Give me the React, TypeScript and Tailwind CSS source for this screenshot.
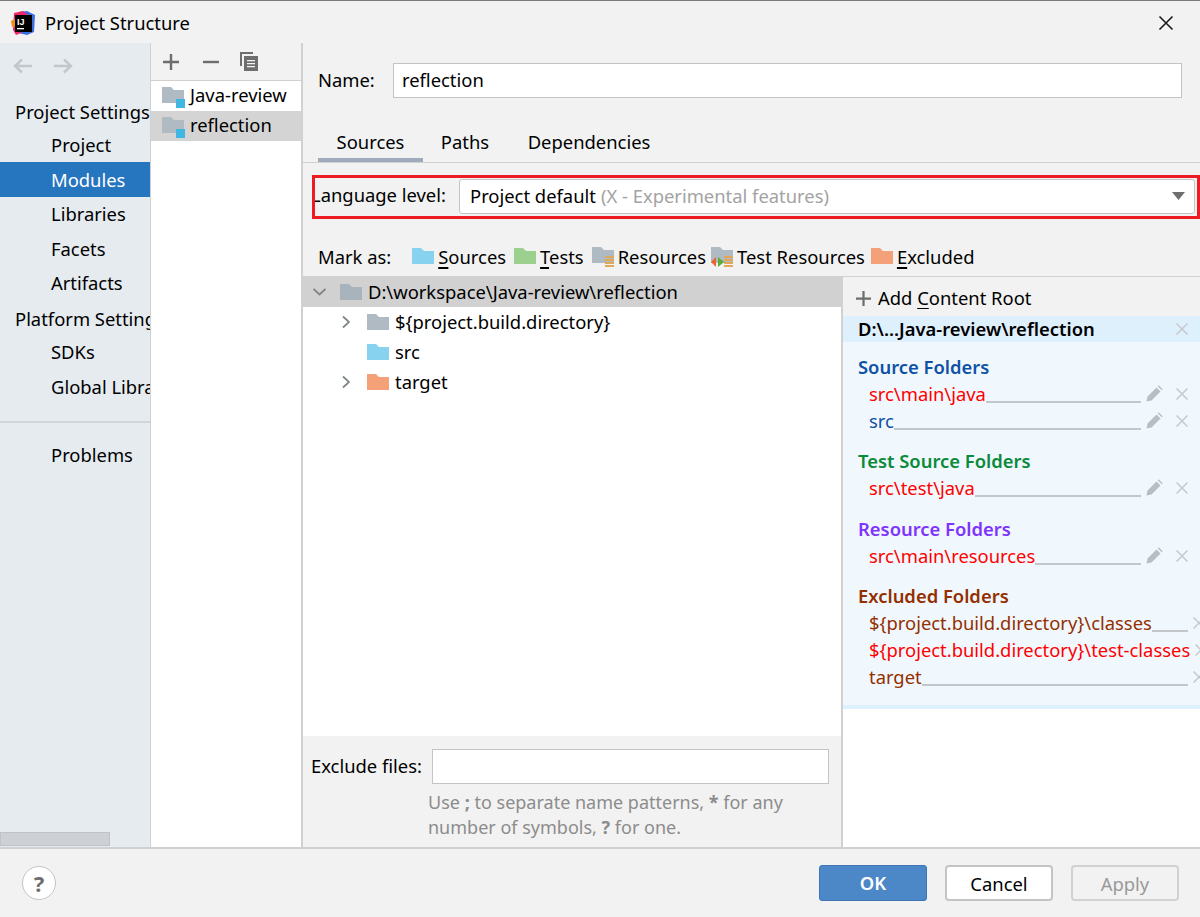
import { ReactNode } from 'react'

const FONT = 'font-["Noto_Sans",sans-serif]'

const Folder = ({ color, className = '' }: { color: string; className?: string }) => (
  <svg width="22" height="16" viewBox="0 0 22 16" className={`shrink-0 ${className}`}>
    <path d="M0 0h9l3 3h10v13H0z" fill={color} />
  </svg>
)

const Stack = ({ className = '' }: { className?: string }) => (
  <svg width="9" height="11" viewBox="0 0 9 11" className={className}>
    <path d="M0 0h9v2H0zM0 3h9v2H0zM0 6h9v2H0zM0 9h9v2H0z" fill="#e0a95a" />
  </svg>
)

const ModuleIcon = () => (
  <span className="relative mr-[4px] h-[24px] w-[24px] shrink-0">
    <Folder color="#afbac3" className="absolute top-[3px] left-0" />
    <span className="absolute bottom-0 left-[14px] h-[9px] w-[9px] bg-[#40b6e0]" />
  </span>
)

const Close = ({ color = '#c5c9cc' }: { color?: string }) => (
  <svg width="12" height="12" viewBox="0 0 12 12" className="shrink-0">
    <path d="M0.500 0.500l11 11M11.500 0.500l-11 11" stroke={color} strokeWidth="1.500" fill="none" />
  </svg>
)

const Pencil = () => (
  <svg width="17" height="17" viewBox="0 0 17 17" className="shrink-0">
    <path d="M0.500 16.500l1-5 9-9 4 4-9 9zM11.700 1.300l1-1 4 4-1 1z" fill="#b9bec3" />
  </svg>
)

const Chevron = ({ down }: { down?: boolean }) => (
  <svg width="13" height="14" viewBox="0 0 13 14" className="shrink-0">
    <path d={down ? 'M0.500 4l6 5.500L12.500 4' : 'M3 1.500L9 7l-6 5.500'} stroke="#7f8487" strokeWidth="1.700" fill="none" />
  </svg>
)

const Plus = ({ size = 16 }: { size?: number }) => (
  <svg width={size} height={size} viewBox="0 0 16 16" className="shrink-0">
    <path d="M6.800 0h2.400v6.800H16v2.400H9.200V16H6.800V9.200H0V6.800h6.800z" fill="#6e6e6e" />
  </svg>
)

const NavItem = ({ label, active }: { label: string; active?: boolean }) => (
  <div className={`flex h-[34.400px] items-center pl-[51px] whitespace-nowrap ${active ? 'bg-[#2675bf] text-white' : ''}`}>
    {label}
  </div>
)

const MarkItem = ({ icon, className = '', children }: { icon: ReactNode; className?: string; children: ReactNode }) => (
  <div className={`flex items-center gap-[4px] whitespace-nowrap ${className}`}>
    {icon}
    <span>{children}</span>
  </div>
)

const Mnemonic = ({ children }: { children: ReactNode }) => (
  <span className="underline decoration-2 underline-offset-[3px]">{children}</span>
)

const FolderRow = ({
  label,
  color,
  edit = true,
  fill = true
}: {
  label: string
  color: string
  edit?: boolean
  fill?: boolean
}) => (
  <div className="flex h-[27px] items-center pl-[26px]">
    <span className={`whitespace-nowrap ${color}`}>{label}</span>
    {fill ? <span className="mt-[17px] h-[2px] min-w-0 flex-1 bg-[#c4c7ca]" /> : <span className="min-w-0 flex-1" />}
    {edit ? (
      <span className="ml-[4px] flex w-[55px] shrink-0 items-center pl-[1px]">
        <Pencil />
        <span className="ml-[13px]">
          <Close />
        </span>
      </span>
    ) : (
      <span className="ml-[5px] w-[7px] shrink-0 overflow-hidden">
        <Close />
      </span>
    )}
  </div>
)

const SectionTitle = ({ label, color }: { label: string; color: string }) => (
  <div className={`flex h-[27px] items-center pl-[15px] font-semibold ${color}`}>{label}</div>
)

export default function App() {
  return (
    <div className={`flex h-[917px] w-[1200px] flex-col overflow-hidden bg-[#f2f2f2] text-[18.400px] text-black ${FONT}`}>
      <div className="flex h-[43px] shrink-0 items-center border-t border-[#7a7a7a] pt-[1px] pr-[26px] pl-[11px]">
        <svg width="24" height="24" viewBox="0 0 24 24" className="shrink-0">
          <path d="M8 1l8-1 8 4-1 17-7 3-9-2z" fill="#3d6ee0" />
          <path d="M3 2l9-2 4 3-6 19-5 2-3-5z" fill="#f0276d" />
          <path d="M0 10l4-2 1 8-4 0z" fill="#f58a1f" />
          <rect x="4" y="4" width="17" height="17" fill="#000" />
          <text x="6" y="13.500" fontSize="9" fontWeight="700" fill="#fff" fontFamily="Liberation Sans, sans-serif">IJ</text>
          <path d="M6 17h7v1.300H6z" fill="#fff" />
        </svg>
        <span className="ml-[10px]">Project Structure</span>
        <svg width="16" height="16" viewBox="0 0 16 16" className="ml-auto shrink-0">
          <path d="M1.500 1.500l13 13M14.500 1.500l-13 13" stroke="#1a1a1a" strokeWidth="1.600" fill="none" />
        </svg>
      </div>

      <div className="flex min-h-0 flex-1">
        <aside className="flex w-[151px] shrink-0 flex-col overflow-hidden border-r border-[#d1d1d1] bg-[#e6ebf0]">
          <div className="flex h-[43px] shrink-0 items-center gap-[20px] pt-[2px] pl-[13px]">
            <svg width="20" height="16" viewBox="0 0 20 16">
              <path d="M19 8H2M9 1.500L2 8l7 6.500" stroke="#c4c7ca" strokeWidth="2.400" fill="none" />
            </svg>
            <svg width="20" height="16" viewBox="0 0 20 16">
              <path d="M1 8h17M11 1.500L18 8l-7 6.500" stroke="#c4c7ca" strokeWidth="2.400" fill="none" />
            </svg>
          </div>
          <div className="mt-[9px]">
            <div className="flex h-[33px] items-center pl-[15px] whitespace-nowrap">Project Settings</div>
            <NavItem label="Project" />
            <NavItem label="Modules" active />
            <NavItem label="Libraries" />
            <NavItem label="Facets" />
            <NavItem label="Artifacts" />
            <div className="flex h-[35px] items-center pt-[2px] pl-[15px] whitespace-nowrap">Platform Settings</div>
            <NavItem label="SDKs" />
            <NavItem label="Global Libraries" />
          </div>
          <div className="mt-[17px] h-[2px] bg-[#d0d5da]" />
          <div className="mt-[15px]">
            <NavItem label="Problems" />
          </div>
          <div className="mt-auto mb-[1px] h-[14px] w-[110px] border border-[#bfc3c8] bg-[#cdd1d6]" />
        </aside>

        <div className="flex w-[152px] shrink-0 flex-col border-r-2 border-[#d1d1d1] bg-white">
          <div className="flex h-[38px] shrink-0 items-center border-b border-[#d1d1d1] bg-[#f2f2f2] pl-[12px]">
            <Plus />
            <svg width="16" height="16" viewBox="0 0 16 16" className="ml-[24px] shrink-0">
              <path d="M0 6.800h16v2.400H0z" fill="#6e6e6e" />
            </svg>
            <svg width="18" height="19" viewBox="0 0 18 19" className="ml-[21px] shrink-0">
              <path d="M0 0h13v2H2v12H0z" fill="#6e6e6e" />
              <path d="M4 4h14v15H4z" fill="#6e6e6e" />
              <path d="M7 8h8v1.300H7zM7 11h8v1.300H7zM7 14h8v1.300H7z" fill="#f2f2f2" />
            </svg>
          </div>
          <div className="flex h-[30px] items-center pl-[11px]">
            <ModuleIcon />
            <span className="pb-[2px]">Java-review</span>
          </div>
          <div className="flex h-[30px] items-center bg-[#d4d4d4] pl-[11px]">
            <ModuleIcon />
            <span className="pb-[2px]">reflection</span>
          </div>
        </div>

        <main className="flex min-w-0 flex-1 flex-col">
          <div className="flex h-[75px] shrink-0 items-start pt-[20px] pr-[18px] pl-[15px]">
            <span className="flex h-[35px] w-[75px] items-center pb-[2px]">Name:</span>
            <div className="flex h-[35px] flex-1 items-center border border-[#c4c4c4] bg-white pb-[2px] pl-[8px]">reflection</div>
          </div>

          <div className="flex h-[45px] shrink-0 border-b border-[#d1d1d1] pl-[15px]">
            <div className="flex w-[105px] items-center justify-center border-b-4 border-[#a0aabb] pt-[7px]">Sources</div>
            <div className="flex w-[84px] items-center justify-center border-b-4 border-transparent pt-[7px]">Paths</div>
            <div className="ml-[2px] flex w-[160px] items-center justify-center border-b-4 border-transparent pt-[7px]">Dependencies</div>
          </div>

          <div className="relative flex h-[56px] shrink-0 items-center pt-[10px] pr-[5px] pl-[8px]">
            <span className="w-[148px] pb-[3px] whitespace-nowrap">Language level:</span>
            <div className="flex h-[35px] flex-1 items-center rounded-[3px] border border-[#c4c4c4] bg-white pr-[9px] pl-[10px]">
              <span className="whitespace-nowrap">Project default</span>
              <span className="ml-[5px] whitespace-nowrap text-[#a3a3a3]">(X - Experimental features)</span>
              <svg width="13" height="8" viewBox="0 0 13 8" className="ml-auto">
                <path d="M0 0h13L6.500 8z" fill="#6e6e6e" />
              </svg>
            </div>
            <div className="pointer-events-none absolute top-[12px] right-0 bottom-0 left-[9px] border-[3px] border-[#ed1c24]" />
          </div>

          <div className="flex h-[57px] shrink-0 items-center pt-[18px] pl-[15px]">
            <span className="mr-[21px]">Mark as:</span>
            <MarkItem icon={<Folder color="#87d2ee" />}>
              <Mnemonic>S</Mnemonic>ources
            </MarkItem>
            <MarkItem className="ml-[8px]" icon={<Folder color="#9cd08e" />}>
              <Mnemonic>T</Mnemonic>ests
            </MarkItem>
            <MarkItem
              className="ml-[8px]"
              icon={
                <span className="relative h-[22px] w-[22px]">
                  <Folder color="#afbac3" className="absolute top-[2px] left-0" />
                  <Stack className="absolute right-0 bottom-0" />
                </span>
              }>
              Resources
            </MarkItem>
            <MarkItem
              className="ml-[5px]"
              icon={
                <span className="relative h-[22px] w-[22px]">
                  <Folder color="#afbac3" className="absolute top-[2px] left-0" />
                  <Stack className="absolute right-0 bottom-0" />
                  <svg width="14" height="10" viewBox="0 0 14 10" className="absolute bottom-0 left-0">
                    <path d="M5 0v10L0 5z" fill="#e8662e" />
                    <path d="M7 0v10l6-5z" fill="#5cad37" />
                  </svg>
                </span>
              }>
              Test Resources
            </MarkItem>
            <MarkItem className="ml-[6px]" icon={<Folder color="#f4a17a" />}>
              <Mnemonic>E</Mnemonic>xcluded
            </MarkItem>
          </div>

          <div className="flex min-h-0 flex-1 border-t border-[#d1d1d1]">
            <div className="flex w-[540px] shrink-0 flex-col border-r-2 border-[#d1d1d1]">
              <div className="min-h-0 flex-1 bg-white">
                <div className="flex h-[30px] items-center bg-[#d1d1d1] pl-[10px]">
                  <Chevron down />
                  <Folder color="#a8b3bc" className="ml-[14px]" />
                  <span className="ml-[6px]">D:\workspace\Java-review\reflection</span>
                </div>
                <div className="flex h-[30px] items-center pl-[37px]">
                  <Chevron />
                  <Folder color="#afbac3" className="ml-[14px]" />
                  <span className="ml-[6px]">{'${project.build.directory}'}</span>
                </div>
                <div className="flex h-[30px] items-center pl-[64px]">
                  <Folder color="#87d2ee" />
                  <span className="ml-[6px]">src</span>
                </div>
                <div className="flex h-[30px] items-center pl-[37px]">
                  <Chevron />
                  <Folder color="#f4a17a" className="ml-[14px]" />
                  <span className="ml-[6px]">target</span>
                </div>
              </div>
              <div className="h-[111px] shrink-0 pt-[13px] pl-[8px]">
                <div className="flex items-center">
                  <span className="w-[121px] pb-[2px]">Exclude files:</span>
                  <div className="h-[35px] w-[397px] border border-[#c4c4c4] bg-white" />
                </div>
                <p className="mt-[6px] ml-[117px] text-[18px] leading-[25px] text-[#8c8c8c]">
                  Use <b>;</b> to separate name patterns, <b>*</b> for any
                  <br />
                  number of symbols, <b>?</b> for one.
                </p>
              </div>
            </div>

            <div className="flex min-w-0 flex-1 flex-col bg-white">
              <div className="flex h-[39px] shrink-0 items-center gap-[7px] bg-[#f2f2f2] pt-[3px] pl-[13px]">
                <Plus size={15} />
                <span>
                  Add <span className="underline underline-offset-[3px]">C</span>ontent Root
                </span>
              </div>
              <div className="flex h-[26px] shrink-0 items-center justify-between bg-[#dff0fd] pr-[12px] pl-[15px] font-semibold">
                D:\...Java-review\reflection
                <Close />
              </div>
              <div className="flex h-[367px] shrink-0 flex-col overflow-hidden border-b-4 border-[#dff0fd] bg-[#f0f8fe] pt-[11px]">
                <SectionTitle label="Source Folders" color="text-[#0f52a5]" />
                <FolderRow label="src\main\java" color="text-[#ff0000]" />
                <FolderRow label="src" color="text-[#0f52a5]" />
                <div className="mt-[13px]">
                  <SectionTitle label="Test Source Folders" color="text-[#0a8a3a]" />
                  <FolderRow label="src\test\java" color="text-[#ff0000]" />
                </div>
                <div className="mt-[14px]">
                  <SectionTitle label="Resource Folders" color="text-[#7f33ff]" />
                  <FolderRow label="src\main\resources" color="text-[#ff0000]" />
                </div>
                <div className="mt-[13px]">
                  <SectionTitle label="Excluded Folders" color="text-[#942f00]" />
                  <FolderRow label="${project.build.directory}\classes" color="text-[#942f00]" edit={false} />
                  <FolderRow label="${project.build.directory}\test-classes" color="text-[#ff0000]" edit={false} fill={false} />
                  <FolderRow label="target" color="text-[#942f00]" edit={false} />
                </div>
              </div>
            </div>
          </div>
        </main>
      </div>

      <footer className="flex h-[70px] shrink-0 items-center border-t-2 border-[#d1d1d1] pr-[21px] pl-[22px]">
        <span className="flex h-[34px] w-[34px] items-center justify-center rounded-full border border-[#c4c4c4] bg-white text-[22px] font-bold text-[#6e6e6e]">?</span>
        <button className="ml-auto h-[36px] w-[108px] rounded-[3px] border border-[#3f75b5] bg-[#4c87c8] font-semibold text-white">OK</button>
        <button className="ml-[18px] h-[36px] w-[108px] rounded-[4px] border-2 border-[#c4c4c4] bg-white pt-[1px]">Cancel</button>
        <button className="ml-[18px] h-[36px] w-[108px] rounded-[4px] border-2 border-[#d1d1d1] pt-[1px] text-[#999999]">Apply</button>
      </footer>
    </div>
  )
}
